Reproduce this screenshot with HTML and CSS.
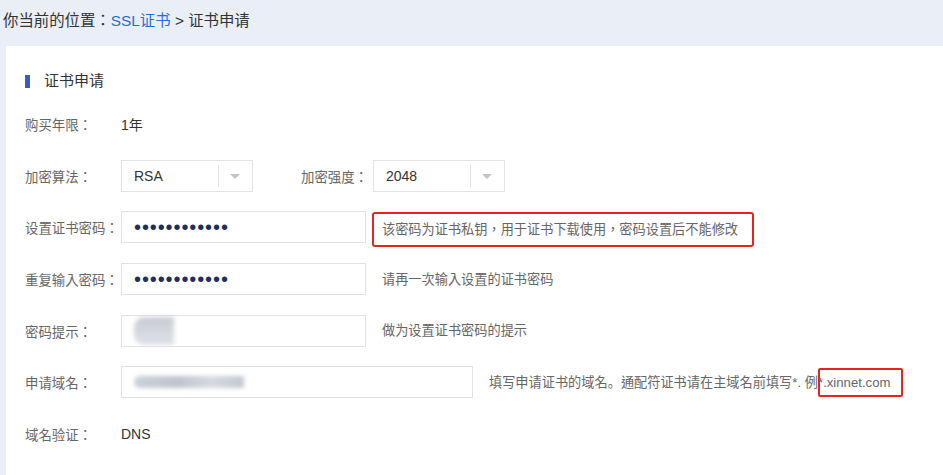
FILE: index.html
```html
<!DOCTYPE html>
<html lang="zh-CN">
<head>
    <meta charset="UTF-8">
    <meta name="viewport" content="width=device-width, initial-scale=1.0">
    <title>证书申请</title>
    <link rel="stylesheet" href="styles.css">
</head>
<body>
    <div class="crumb">你当前的位置：<a href="#">SSL证书</a> &gt; 证书申请</div>
    <div class="panel">
        <h2 class="title">证书申请</h2>
        <div class="form">
            <div class="row">
                <span class="label">购买年限：</span>
                <span class="value">1年</span>
            </div>
            <div class="row">
                <span class="label">加密算法：</span>
                <div class="select"><span class="val">RSA</span><span class="arrow"></span></div>
                <span class="label label-mid">加密强度：</span>
                <div class="select"><span class="val">2048</span><span class="arrow"></span></div>
            </div>
            <div class="row">
                <span class="label">设置证书密码：</span>
                <input class="input pwd" type="password" value="abcdefghijkl">
                <span class="hint marked">该密码为证书私钥，用于证书下载使用，密码设置后不能修改</span>
            </div>
            <div class="row">
                <span class="label">重复输入密码：</span>
                <input class="input pwd" type="password" value="abcdefghijkl">
                <span class="hint">请再一次输入设置的证书密码</span>
            </div>
            <div class="row">
                <span class="label">密码提示：</span>
                <div class="input"><span class="blur blur-short"></span></div>
                <span class="hint">做为设置证书密码的提示</span>
            </div>
            <div class="row">
                <span class="label">申请域名：</span>
                <div class="input input-wide"><span class="blur blur-long"></span></div>
                <span class="hint">填写申请证书的域名<span class="sc">。</span>通配符证书请在主域名前填写*. 例<span class="mark">*.xinnet.com</span></span>
            </div>
            <div class="row">
                <span class="label">域名验证：</span>
                <span class="value">DNS</span>
            </div>
        </div>
    </div>
</body>
</html>
```

FILE: styles.css
```css
* { margin: 0; padding: 0; box-sizing: border-box; }
body { background: #eaeef7; font-family: "Liberation Sans", "Noto Sans CJK TC", "Noto Sans CJK SC", sans-serif; font-feature-settings: "locl" 0; color: #333; height: 475px; overflow: hidden; }
.crumb { height: 46px; padding: 11px 0 0 3px; font-size: 15.4px; line-height: 20px; color: #333; }
.crumb a { color: #2b6bd6; text-decoration: none; }
.panel { margin-left: 6px; background: #fff; height: 429px; padding: 25px 0 0 19px; }
.title { display: flex; align-items: center; font-size: 15px; font-weight: normal; line-height: 20px; color: #333; }
.title::before { content: ""; width: 5px; height: 13px; background: #3460b8; margin-right: 14px; }
.form { display: flex; flex-direction: column; gap: 19.7px; margin-top: 17px; }
.row { display: flex; align-items: center; height: 32px; }
.label { width: 96px; font-size: 13.4px; color: #666; flex-shrink: 0; }
.label-mid { width: 72px; margin-left: 48px; }
.value { font-size: 14px; color: #333; }
.select { display: flex; align-items: center; width: 132px; height: 32px; border: 1px solid #e3e3e3; }
.select .val { flex: 1; padding-left: 12px; font-size: 14px; color: #333; }
.select .arrow { width: 34px; height: 22px; border-left: 1px solid #e3e3e3; position: relative; }
.select .arrow::after { content: ""; position: absolute; left: 11px; top: 9px; border: 5px solid transparent; border-top: 5px solid #c4c4c4; border-bottom: 0; }
.input { width: 245px; height: 32px; border: 1px solid #e2e2e2; background: #fff; padding-left: 12px; display: flex; align-items: center; outline: none; }
.input-wide { width: 352px; }
.pwd { font-family: "Liberation Sans", sans-serif; font-size: 20px; letter-spacing: 0.9px; color: #1d2f5c; }
.hint { margin-left: 6px; padding: 0 8px; border: 2px solid transparent; border-radius: 3px; font-size: 13.2px; line-height: 31px; color: #666; white-space: nowrap; }
.hint.marked { border-color: #e8231f; margin-top: 4px; padding-right: 14px; }
.sc { font-family: "Noto Sans CJK SC", sans-serif; }
.mark { position: relative; }
.mark::after { content: ""; position: absolute; left: 0; right: -12px; top: -7px; bottom: -7px; border: 2px solid #e8231f; border-radius: 2px; }
.blur { display: block; height: 22px; border-radius: 10px 0 0 10px; background: linear-gradient(#c9ccd4, #dfe2e8); filter: blur(2px); }
.blur-short { width: 40px; height: 28px; }
.blur-long { width: 110px; height: 12px; background: linear-gradient(90deg, #ccd0d8, #bfc3cc 40%, #d6d9df 70%, #c4c8d0); }
```
